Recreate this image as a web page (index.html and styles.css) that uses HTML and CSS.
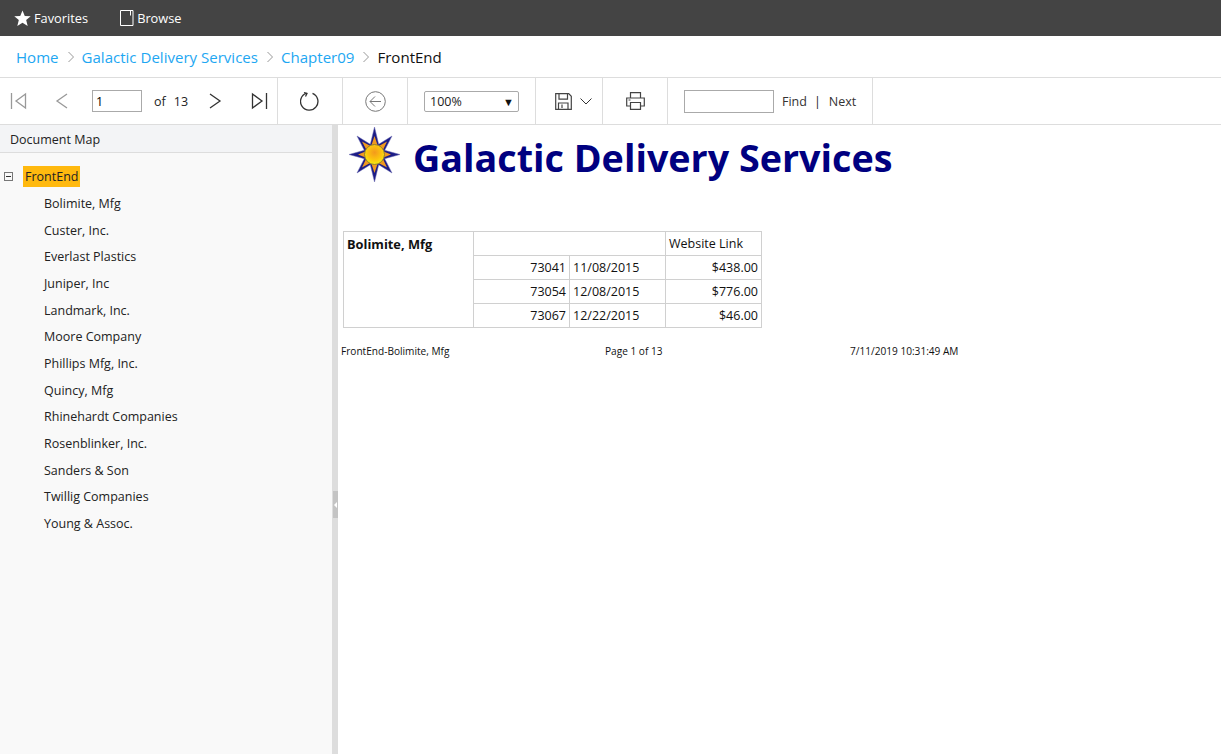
FILE: index.html
```html
<!DOCTYPE html>
<html lang="en">

<head>
    <meta charset="UTF-8">
    <title>FrontEnd</title>
    <link rel="stylesheet" href="styles.css">
</head>

<body>
    <nav class="topbar">
        <a class="top-link fav-link">
            <svg class="top-icon" width="17" height="17" viewBox="0 0 18 18"><path d="M9 .5l2.400 5.800 6.300.4-4.800 4 1.600 6.200L9 13.600l-5.500 3.300 1.600-6.200-4.800-4 6.300-.4z" fill="#fff"/></svg>
            Favorites
        </a>
        <a class="top-link">
            <svg class="top-icon" width="14" height="16" viewBox="0 0 14 16"><path d="M.5.500h12.500v15H.5zM10.500.5v5" fill="none" stroke="#fff"/></svg>
            Browse
        </a>
    </nav>

    <div class="crumbs">
        <a>Home</a>
        <svg class="crumb-sep" width="8" height="12" viewBox="0 0 8 12"><path d="M1.500 1l5 5-5 5" fill="none" stroke="#999"/></svg>
        <a>Galactic Delivery Services</a>
        <svg class="crumb-sep" width="8" height="12" viewBox="0 0 8 12"><path d="M1.500 1l5 5-5 5" fill="none" stroke="#999"/></svg>
        <a>Chapter09</a>
        <svg class="crumb-sep" width="8" height="12" viewBox="0 0 8 12"><path d="M1.500 1l5 5-5 5" fill="none" stroke="#999"/></svg>
        <span>FrontEnd</span>
    </div>

    <div class="toolbar">
        <div class="tool-group pager">
            <svg class="pg-first" width="17" height="18" viewBox="0 0 17 18"><path d="M1.500 1v16M15.500 2L6 9l9.500 7z" fill="none" stroke="#999" stroke-width="1.300"/></svg>
            <svg class="pg-prev" width="13" height="18" viewBox="0 0 13 18"><path d="M12 2L2 9l10 7" fill="none" stroke="#999" stroke-width="1.300"/></svg>
            <input class="page-input" type="text" value="1">
            <span class="page-of">of</span>
            <span class="page-total">13</span>
            <svg class="pg-next" width="13" height="18" viewBox="0 0 13 18"><path d="M1 2l10 7-10 7" fill="none" stroke="#333" stroke-width="1.300"/></svg>
            <svg class="pg-last" width="17" height="18" viewBox="0 0 17 18"><path d="M15.500 1v16M1.500 2L11 9l-9.500 7z" fill="none" stroke="#333" stroke-width="1.300"/></svg>
        </div>
        <div class="tool-group refresh">
            <svg width="20" height="20" viewBox="0 0 20 20"><path d="M6.500 2.200a8.700 8.700 0 1 0 6 .2M4 1.500l3 1-1.500 3" fill="none" stroke="#333" stroke-width="1.300"/></svg>
        </div>
        <div class="tool-group back">
            <svg width="21" height="21" viewBox="0 0 21 21"><circle cx="10.500" cy="10.500" r="9.800" fill="none" stroke="#777"/><path d="M16 10.500H5M10 5.500l-5 5 5 5" fill="none" stroke="#777"/></svg>
        </div>
        <div class="tool-group zoom">
            <div class="zoom-select">100%<span class="zoom-arrow">▼</span></div>
        </div>
        <div class="tool-group save">
            <svg width="17" height="17" viewBox="0 0 17 17"><path d="M.7.700h13l2.600 2.600v13H.7zM4 .7v5.500h8.500V.7M3.500 16.300V10h9.500v6.300M7 11.500v3.500" fill="none" stroke="#444" stroke-width="1.200"/></svg>
            <svg class="save-caret" width="12" height="7" viewBox="0 0 12 7"><path d="M.5.500L6 6 11.500.5" fill="none" stroke="#333"/></svg>
        </div>
        <div class="tool-group print">
            <svg width="19" height="18" viewBox="0 0 19 18"><path d="M4.500 6V.7h10V6M4.500 14H.7V6h17.600v8h-3.800M4.500 10.500h10v6.800h-10zM2.500 8h2" fill="none" stroke="#444" stroke-width="1.200"/></svg>
        </div>
        <div class="tool-group find">
            <input class="find-input" type="text">
            <a class="find-link">Find</a>
            <span class="find-bar">|</span>
            <a class="find-link">Next</a>
        </div>
    </div>

    <main class="split">
        <aside class="doc-map">
            <div class="map-title">Document Map</div>
            <div class="map-root">
                <span class="tree-toggle"></span>
                <span class="tree-current">FrontEnd</span>
            </div>
            <ul class="map-list">
                <li>Bolimite, Mfg</li>
                <li>Custer, Inc.</li>
                <li>Everlast Plastics</li>
                <li>Juniper, Inc</li>
                <li>Landmark, Inc.</li>
                <li>Moore Company</li>
                <li>Phillips Mfg, Inc.</li>
                <li>Quincy, Mfg</li>
                <li>Rhinehardt Companies</li>
                <li>Rosenblinker, Inc.</li>
                <li>Sanders &amp; Son</li>
                <li>Twillig Companies</li>
                <li>Young &amp; Assoc.</li>
            </ul>
        </aside>

        <div class="splitter">
            <div class="grip"><span class="grip-arrow"></span></div>
        </div>

        <section class="report">
            <header class="report-head">
                <svg class="logo" width="52" height="56" viewBox="0 0 52 56">
                    <defs>
                        <radialGradient id="sun" cx="0.5" cy="0.4" r="0.6">
                            <stop offset="0" stop-color="#f39a1c"/>
                            <stop offset="0.6" stop-color="#fbc40e"/>
                            <stop offset="1" stop-color="#f4ee10"/>
                        </radialGradient>
                    </defs>
                    <path d="M25.500 0l4.200 17.300L43 9l-7.300 14.300L51 27.500l-15.300 4.200L43 46l-13.300-8.300L25.500 55l-4.200-17.300L8 46l7.300-14.300L0 27.500l15.300-4.200L8 9l13.300 8.300z" fill="#1c1c86" stroke="#6a6ab0" stroke-width="0.500"/>
                    <path d="M25.500 9l3 9h-6zM38 14.500L33.500 24 29 19.500zM13 14.500l9.500 5L18 24zM42 27.500l-7.500 3v-6zM9 27.500l7.500-3v6zM38 40.500l-9.500-5 5-4.500zM13 40.500l4.500-9.500 4.500 4.500zM25.500 46l-3-9h6z" fill="#f09a1e"/>
                    <circle cx="25.500" cy="27.500" r="10" fill="url(#sun)" stroke="#8d7c34"/>
                </svg>
                <h1>Galactic Delivery Services</h1>
            </header>

            <table class="report-table">
                <colgroup>
                    <col class="col-name">
                    <col class="col-data">
                    <col class="col-data">
                    <col class="col-data">
                </colgroup>
                <tr>
                    <th rowspan="4">Bolimite, Mfg</th>
                    <td colspan="2"></td>
                    <td>Website Link</td>
                </tr>
                <tr>
                    <td class="num">73041</td>
                    <td>11/08/2015</td>
                    <td class="num">$438.00</td>
                </tr>
                <tr>
                    <td class="num">73054</td>
                    <td>12/08/2015</td>
                    <td class="num">$776.00</td>
                </tr>
                <tr>
                    <td class="num">73067</td>
                    <td>12/22/2015</td>
                    <td class="num">$46.00</td>
                </tr>
            </table>

            <footer class="report-foot">
                <span>FrontEnd-Bolimite, Mfg</span>
                <span>Page 1 of 13</span>
                <span>7/11/2019 10:31:49 AM</span>
            </footer>
        </section>
    </main>
</body>

</html>
```

FILE: styles.css
```css
* {
    box-sizing: border-box;
}

html,
body {
    height: 100%;
}

body {
    margin: 0;
    display: flex;
    flex-direction: column;
    overflow: hidden;
    font-family: "Open Sans", "Noto Sans", sans-serif;
    color: #222;
    background: #fff;
}

.topbar {
    height: 36px;
    flex: none;
    display: flex;
    align-items: center;
    padding-left: 14px;
    background: #444;
    color: #fff;
    font-size: 12.800px;
}

.top-link {
    display: flex;
    align-items: center;
}

.fav-link {
    margin-right: 32px;
}

.top-icon {
    margin-right: 3px;
}

.crumbs {
    height: 42px;
    flex: none;
    display: flex;
    align-items: center;
    padding-left: 16px;
    border-bottom: 1px solid #ddd;
    font-size: 15.050px;
    color: #111;
}

.crumbs a {
    color: #1ea7f2;
}

.crumb-sep {
    margin: 0 7px 0 8px;
}

.toolbar {
    height: 47px;
    flex: none;
    display: flex;
    border-bottom: 1px solid #ddd;
    font-size: 12.500px;
}

.tool-group {
    display: flex;
    align-items: center;
    border-right: 1px solid #ddd;
}

.pager {
    width: 278px;
    padding-left: 10px;
}

.pg-prev {
    margin-left: 28px;
}

.page-input {
    width: 50px;
    height: 22px;
    margin-left: 24px;
    padding: 0 3px;
    border: 1px solid #aaa;
    font: inherit;
}

.page-of {
    margin-left: 12px;
}

.page-total {
    margin-left: 8px;
}

.pg-next {
    margin-left: 21px;
}

.pg-last {
    margin-left: 29px;
}

.refresh {
    width: 65px;
    justify-content: center;
}

.back {
    width: 65px;
    justify-content: center;
}

.zoom {
    width: 128px;
    padding-left: 16px;
}

.zoom-select {
    width: 95px;
    height: 21px;
    display: flex;
    align-items: center;
    justify-content: space-between;
    padding: 0 4px 0 5px;
    border: 1px solid #aaa;
    border-radius: 2px;
}

.zoom-arrow {
    font-size: 11px;
    color: #111;
}

.save {
    width: 67px;
    padding-left: 19px;
}

.save-caret {
    margin-left: 8px;
}

.print {
    width: 65px;
    justify-content: center;
}

.find {
    width: 205px;
    padding-left: 16px;
}

.find-input {
    width: 90px;
    height: 23px;
    margin-right: 8px;
    border: 1px solid #aaa;
}

.find-link {
    color: #333;
}

.find-bar {
    margin: 0 8px 0 7px;
}

.split {
    flex: 1;
    display: flex;
    min-height: 0;
}

.doc-map {
    width: 332px;
    flex: none;
    background: #f9f9f9;
    font-size: 12.500px;
}

.map-title {
    height: 28px;
    display: flex;
    align-items: center;
    padding: 1px 0 0 10px;
    background: #f3f4f6;
    border-bottom: 1px solid #ddd;
}

.map-root {
    display: flex;
    align-items: center;
    margin-top: 13px;
    padding-left: 4px;
}

.tree-toggle {
    width: 9px;
    height: 9px;
    margin-right: 10px;
    border: 1px solid #777;
    background: linear-gradient(#333, #333) center / 5px 1px no-repeat;
}

.tree-current {
    height: 21px;
    display: flex;
    align-items: center;
    padding: 0 2px;
    background: #ffb90f;
}

.map-list {
    list-style: none;
    margin: 3px 0 0;
    padding: 0 0 0 44px;
}

.map-list li {
    height: 26.700px;
    display: flex;
    align-items: center;
}

.splitter {
    width: 6px;
    flex: none;
    display: flex;
    justify-content: center;
    padding-top: 366px;
    background: #ddd;
}

.grip {
    width: 5px;
    height: 27px;
    display: flex;
    align-items: center;
    justify-content: center;
    background: #c4c4c4;
}

.grip-arrow {
    width: 0;
    height: 0;
    border: 3px solid transparent;
    border-left: 0;
    border-right-color: #fff;
}

.report {
    flex: 1;
    padding: 0 0 0 3px;
    color: #111;
}

.report-head {
    display: flex;
    align-items: center;
    height: 62px;
    padding: 3px 0 0 8px;
}

.logo {
    flex: none;
    margin-top: -5px;
}

h1 {
    margin: 0 0 0 12px;
    font-size: 37.700px;
    font-weight: 700;
    line-height: 1;
    color: #000080;
}

.report-table {
    margin: 44px 0 0 2px;
    border-collapse: collapse;
    table-layout: fixed;
    width: 419px;
    font-size: 12.500px;
}

.col-name {
    width: 130px;
}

.col-data {
    width: 96px;
}

.report-table th,
.report-table td {
    height: 24px;
    padding: 0 3px;
    border: 1px solid #d0d0d0;
    font-weight: 400;
}

.report-table th {
    vertical-align: top;
    padding-top: 3px;
    text-align: left;
    font-size: 12.800px;
    font-weight: 700;
}

.report-table .num {
    text-align: right;
}

.report-foot {
    display: grid;
    grid-template-columns: 264px 245px auto;
    margin-top: 16px;
    font-size: 10.100px;
    line-height: 14px;
}
```
